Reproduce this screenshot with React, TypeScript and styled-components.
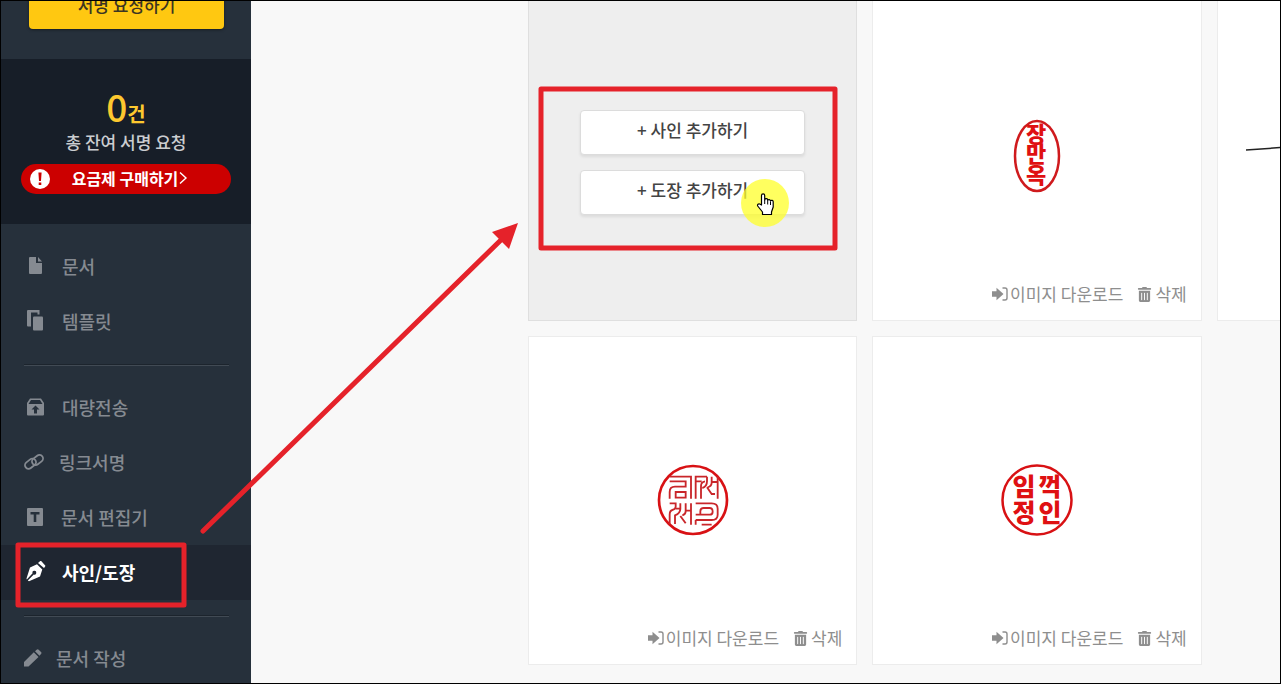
import React from "react";
import styled, { createGlobalStyle, css } from "styled-components";
import { FaTrashAlt } from "react-icons/fa";

const GlobalStyle = createGlobalStyle`
  *, *::before, *::after { box-sizing: border-box; }
  html, body, #root { height: 100%; }
  body {
    margin: 0;
    overflow: hidden;
    background: #f8f8f8;
    font-family: "Noto Sans CJK KR", sans-serif;
    font-weight: 500;
  }
  button { font: inherit; cursor: pointer; }
  a { color: inherit; text-decoration: none; }
`;

const Page = styled.div`
  position: relative;
  display: flex;
  height: 100%;
  overflow: hidden;
  border: 1px solid #000;
`;

const Sidebar = styled.aside`
  flex: 0 0 250px;
  display: flex;
  flex-direction: column;
  overflow: hidden;
  background: #26303b;
`;

const RequestArea = styled.div`
  flex: none;
  display: flex;
  align-items: flex-end;
  height: 58px;
  padding: 0 27px 30px 28px;
`;

const RequestButton = styled.button`
  flex: 1;
  height: 46px;
  padding: 0 0 2px;
  border: 0;
  border-radius: 4px;
  background: #ffc811;
  color: #3b3522;
  font-size: 17px;
  line-height: 44px;
  box-shadow: 0 1px 3px rgba(0, 0, 0, 0.4);
`;

const Quota = styled.section`
  flex: none;
  display: flex;
  flex-direction: column;
  align-items: center;
  height: 165px;
  padding: 26px 20px 0;
  background: #171e28;
`;

const QuotaCount = styled.p`
  display: flex;
  align-items: baseline;
  height: 44px;
  margin: 0;
  color: #fdc82f;
  font-size: 20px;
  font-weight: 700;
  line-height: 42px;
`;

const QuotaNumber = styled.span`
  font-size: 37px;
  font-weight: 500;
`;

const QuotaLabel = styled.p`
  margin: 0;
  color: #cbcdd0;
  font-size: 17px;
  line-height: 26px;
`;

const BuyLink = styled.a`
  position: relative;
  display: flex;
  align-items: center;
  justify-content: center;
  align-self: stretch;
  height: 30px;
  margin-top: 9px;
  padding: 0 0 2px 8px;
  border-radius: 15px;
  background: #cc0000;
  color: #fff;
  font-size: 16px;
  font-weight: 700;
  line-height: 28px;
`;

const AlertMark = styled.svg`
  position: absolute;
  left: 9px;
  top: 5px;
`;

const Menu = styled.nav`
  padding-top: 15px;
`;

const MenuLink = styled.a<{ $active?: boolean }>`
  display: flex;
  align-items: center;
  gap: 15px;
  height: 55px;
  padding: 0 0 2px 23px;
  color: #858a91;
  font-size: 18px;
  line-height: 26px;
  ${(p) =>
    p.$active &&
    css`
      background: #1f2631;
      color: #fff;
      font-weight: 700;
    `}
`;

const IconSlot = styled.span<{ $width: number }>`
  flex: none;
  display: flex;
  justify-content: center;
  width: ${(p) => p.$width}px;
  svg { flex: none; }
`;

const Divider = styled.hr`
  height: 2px;
  margin: 15px 22px 14px 23px;
  border: 0;
  border-top: 1px solid #1c242d;
  border-bottom: 1px solid #414a54;
`;

const Main = styled.main`
  flex: 1;
  min-width: 0;
  overflow: hidden;
  padding-left: 277px;
`;

const CardGrid = styled.div`
  display: grid;
  grid-template-columns: repeat(3, 1fr);
  grid-auto-rows: 329px;
  gap: 15px;
  width: 1018px;
  margin-top: -9px;
`;

const Card = styled.article<{ $muted?: boolean }>`
  display: flex;
  flex-direction: column;
  align-items: center;
  justify-content: center;
  border: 1px solid ${(p) => (p.$muted ? "#dfdfdf" : "#ececec")};
  background: ${(p) => (p.$muted ? "#eeeeee" : "#fff")};
`;

const AddCard = styled(Card)`
  gap: 15px;
  padding-top: 12px;
`;

const AddButton = styled.button`
  width: 225px;
  height: 45px;
  padding: 0 0 5px;
  border: 1px solid #dcdcdc;
  border-radius: 4px;
  background: #fff;
  color: #444;
  font-size: 17px;
  line-height: 36px;
  box-shadow: 0 2px 3px rgba(0, 0, 0, 0.08);
`;

const Artwork = styled.div`
  flex: 1;
  display: flex;
  align-items: center;
  justify-content: center;
  align-self: stretch;
  padding-top: 40px;
`;

const CardActions = styled.div`
  display: flex;
  align-items: center;
  align-self: flex-end;
  gap: 14px;
  height: 42px;
  padding: 0 14px 10px 0;
`;

const ActionButton = styled.button<{ $gap: number }>`
  display: flex;
  align-items: center;
  gap: ${(p) => p.$gap}px;
  padding: 0;
  border: 0;
  background: none;
  color: #8e8e8e;
  font-size: 17px;
  font-weight: 400;
  line-height: 24px;
`;

const SealText = styled.text`
  fill: #df1012;
  font-family: "Noto Sans CJK KR", sans-serif;
  font-weight: 900;
  text-anchor: middle;
`;

const Annotations = styled.svg`
  position: absolute;
  left: -1px;
  top: -1px;
  pointer-events: none;
`;

const icons = {
  file: (
    <svg width="13" height="17" viewBox="0 0 13 17" fill="currentColor">
      <path d="M1 0H7V6H13V16a1 1 0 0 1-1 1H1a1 1 0 0 1-1-1V1a1 1 0 0 1 1-1ZM9 0l4 4.500H9Z" />
    </svg>
  ),
  copy: (
    <svg width="17" height="21" viewBox="0 0 17 21" fill="currentColor">
      <path d="M1 0H12.500V4.500H10.500V2.500H4V16.500H1a1 1 0 0 1-1-1V1a1 1 0 0 1 1-1Z" />
      <rect x="6" y="6.500" width="10" height="14" rx="1" />
    </svg>
  ),
  box: (
    <svg width="17" height="18" viewBox="0 0 17 18" fill="currentColor">
      <path d="M3 .5H14L17 5V6H15.500L13 2H4L1.500 6H0V5Z" />
      <path fillRule="evenodd" d="M0 6H17V16.500a1 1 0 0 1-1 1H1a1 1 0 0 1-1-1ZM8.500 7.500 4.500 11.500H7V15.500H10V11.500H12.500Z" />
    </svg>
  ),
  link: (
    <svg width="20" height="18" viewBox="0 0 20 18" fill="none" stroke="currentColor" strokeWidth="1.800">
      <rect x="-6" y="-3.600" width="12" height="7.200" rx="3.600" transform="translate(6.500 10.700) rotate(-38)" />
      <rect x="-6" y="-3.600" width="12" height="7.200" rx="3.600" transform="translate(13.500 7) rotate(-38)" />
    </svg>
  ),
  text: (
    <svg width="16" height="18" viewBox="0 0 16 18" fill="currentColor">
      <path fillRule="evenodd" d="M1 0H15a1 1 0 0 1 1 1V17a1 1 0 0 1-1 1H1a1 1 0 0 1-1-1V1a1 1 0 0 1 1-1ZM3.500 4V6.500H6.700V14H9.300V6.500H12.500V4Z" />
    </svg>
  ),
  nib: (
    <svg width="20" height="21" viewBox="0 0 20 21" fill="currentColor">
      <path d="M12 2 14 .2a1 1 0 0 1 1.400 0L19 4.300a1 1 0 0 1 0 1.400L18 7Z" />
      <path fillRule="evenodd" d="M11 3.200 16.300 8.500 14 15.500 3 20.300 1.800 19.500 7.800 13.500A1.900 1.900 0 1 0 6.600 12.300L.8 18.400 .5 17.500 4 6.500Z" />
    </svg>
  ),
  pencil: (
    <svg width="18" height="18" viewBox="0 0 18 18" fill="currentColor">
      <path d="M0 13 9.800 3.200 14.500 7.900 4.500 17.500H0ZM11 2.200 12.600 .7a1.500 1.500 0 0 1 2.100 0L17 3a1.500 1.500 0 0 1 0 2.100L15.500 6.700Z" />
    </svg>
  ),
};

function MenuItem({ icon, slot = 23, active, children }: {
  icon: keyof typeof icons;
  slot?: number;
  active?: boolean;
  children: React.ReactNode;
}) {
  return (
    <MenuLink href="#" $active={active} aria-current={active ? "page" : undefined}>
      <IconSlot $width={slot}>{icons[icon]}</IconSlot>
      {children}
    </MenuLink>
  );
}

function DownloadIcon() {
  return (
    <svg width="16" height="14" viewBox="0 0 16 14">
      <path fill="currentColor" d="M0 4.300H4.500V.8L11.500 7 4.500 13.200V9.700H0Z" />
      <path fill="none" stroke="currentColor" strokeWidth="1.400" d="M10.500 1H13a2 2 0 0 1 2 2V11a2 2 0 0 1-2 2H10.500" />
    </svg>
  );
}

function SealCard({ children }: { children: React.ReactNode }) {
  return (
    <Card>
      <Artwork>{children}</Artwork>
      <CardActions>
        <ActionButton type="button" $gap={2}>
          <DownloadIcon />
          이미지 다운로드
        </ActionButton>
        <ActionButton type="button" $gap={3}>
          <FaTrashAlt size={15} />
          삭제
        </ActionButton>
      </CardActions>
    </Card>
  );
}

function OvalSeal() {
  return (
    <svg width="48" height="74" viewBox="0 0 48 74">
      <ellipse cx="24" cy="37" rx="22" ry="35" fill="none" stroke="#cf1a1d" strokeWidth="2.500" />
      <SealText x="23" y="23" fontSize="22">장</SealText>
      <SealText x="23" y="43" fontSize="22">만</SealText>
      <SealText x="23" y="64" fontSize="22">옥</SealText>
    </svg>
  );
}

function ScriptSeal() {
  return (
    <svg width="76" height="76" viewBox="0 0 228 228" fill="none">
      <circle cx="114" cy="114" r="102" stroke="#d81114" strokeWidth="8" />
      <g stroke="#c9262a" strokeWidth="5.500">
        <path d="M44 44H108V110M44 58H92V74H60Q44 74 44 90V110M62 107V90H92V107Z" />
        <path d="M122 110V44H156M138 110V72Q138 60 150 58M122 58H140M156 44V58Q156 74 142 78M156 76L170 96H180M170 44V62Q170 72 158 76M188 44V110M172 60H186" />
        <path d="M44 124H62V134Q62 142 52 144Q44 146 44 158V186M62 140H76V124M76 140Q76 154 60 160V186M76 162L92 184M92 124V148Q92 158 82 160M108 124V188M92 146H106" />
        <path d="M122 188V174M122 124H170Q188 124 188 140V158Q188 174 170 174H122M122 158H164Q173 158 173 149Q173 138 164 138H146Q136 138 136 148V156M140 188H170" />
      </g>
    </svg>
  );
}

function RoundSeal() {
  return (
    <svg width="74" height="74" viewBox="0 0 74 74">
      <circle cx="37" cy="37" r="34.500" fill="none" stroke="#d81114" strokeWidth="2.500" />
      <SealText x="24" y="33" fontSize="25">임</SealText>
      <SealText x="50" y="33" fontSize="25">꺽</SealText>
      <SealText x="24" y="59" fontSize="25">정</SealText>
      <SealText x="50" y="59" fontSize="25">인</SealText>
    </svg>
  );
}

export default function App() {
  return (
    <Page>
      <GlobalStyle />
      <Sidebar>
        <RequestArea>
          <RequestButton type="button">서명 요청하기</RequestButton>
        </RequestArea>
        <Quota>
          <QuotaCount><QuotaNumber>0</QuotaNumber>건</QuotaCount>
          <QuotaLabel>총 잔여 서명 요청</QuotaLabel>
          <BuyLink href="#">
            <AlertMark width="20" height="20" viewBox="0 0 20 20">
              <circle cx="10" cy="10" r="10" fill="#fff" />
              <path d="M8.400 3.500H11.600L11 12H9ZM8.700 13.500H11.300V16H8.700Z" fill="#cc0000" />
            </AlertMark>
            요금제 구매하기
            <svg width="10" height="14" viewBox="0 0 10 14" fill="none" stroke="#fff" strokeWidth="1.400" aria-hidden="true">
              <path d="M2 1.500 8 7 2 12.500" />
            </svg>
          </BuyLink>
        </Quota>
        <Menu>
          <MenuItem icon="file">문서</MenuItem>
          <MenuItem icon="copy">템플릿</MenuItem>
          <Divider />
          <MenuItem icon="box">대량전송</MenuItem>
          <MenuItem icon="link" slot={20}>링크서명</MenuItem>
          <MenuItem icon="text" slot={22}>문서 편집기</MenuItem>
          <MenuItem icon="nib" active>사인/도장</MenuItem>
          <Divider />
          <MenuItem icon="pencil" slot={17}>문서 작성</MenuItem>
        </Menu>
      </Sidebar>
      <Main>
        <CardGrid>
          <AddCard $muted>
            <AddButton type="button">+ 사인 추가하기</AddButton>
            <AddButton type="button">+ 도장 추가하기</AddButton>
          </AddCard>
          <SealCard><OvalSeal /></SealCard>
          <Card>
            <Artwork>
              <svg width="272" height="80" viewBox="0 0 272 80" fill="none" stroke="#222" strokeWidth="1.500">
                <path d="M1 13 36 10.500 120 9 180 20 272 8" />
              </svg>
            </Artwork>
          </Card>
          <SealCard><ScriptSeal /></SealCard>
          <SealCard><RoundSeal /></SealCard>
        </CardGrid>
      </Main>
      <Annotations width="1281" height="684" viewBox="0 0 1281 684" fill="none" aria-hidden="true">
        <circle cx="765" cy="203" r="24" fill="#ffff2a" fillOpacity="0.750" />
        <path
          d="M761.500 205V195.500a1.600 1.600 0 0 1 3.200 0V200a1.500 1.500 0 0 1 3 .3 1.500 1.500 0 0 1 2.800.6 1.500 1.500 0 0 1 2.700 1V207L771.500 212V214.500H762.500V212L757.700 206a1.500 1.500 0 0 1 2-2Z"
          fill="#fff" stroke="#000" strokeWidth="1.200" strokeLinejoin="round"
        />
        <path d="M764.700 200V204M767.700 200.500V204.500M770.500 201.500V205" stroke="#000" />
        <g stroke="#e5222a" strokeWidth="5" strokeLinejoin="round">
          <rect x="541" y="89" width="294" height="159" />
          <rect x="18" y="545" width="166" height="60" />
          <path d="M203 531 504 237" strokeLinecap="round" />
        </g>
        <path d="M518 223 509 249 492 232Z" fill="#e5222a" />
      </Annotations>
    </Page>
  );
}
